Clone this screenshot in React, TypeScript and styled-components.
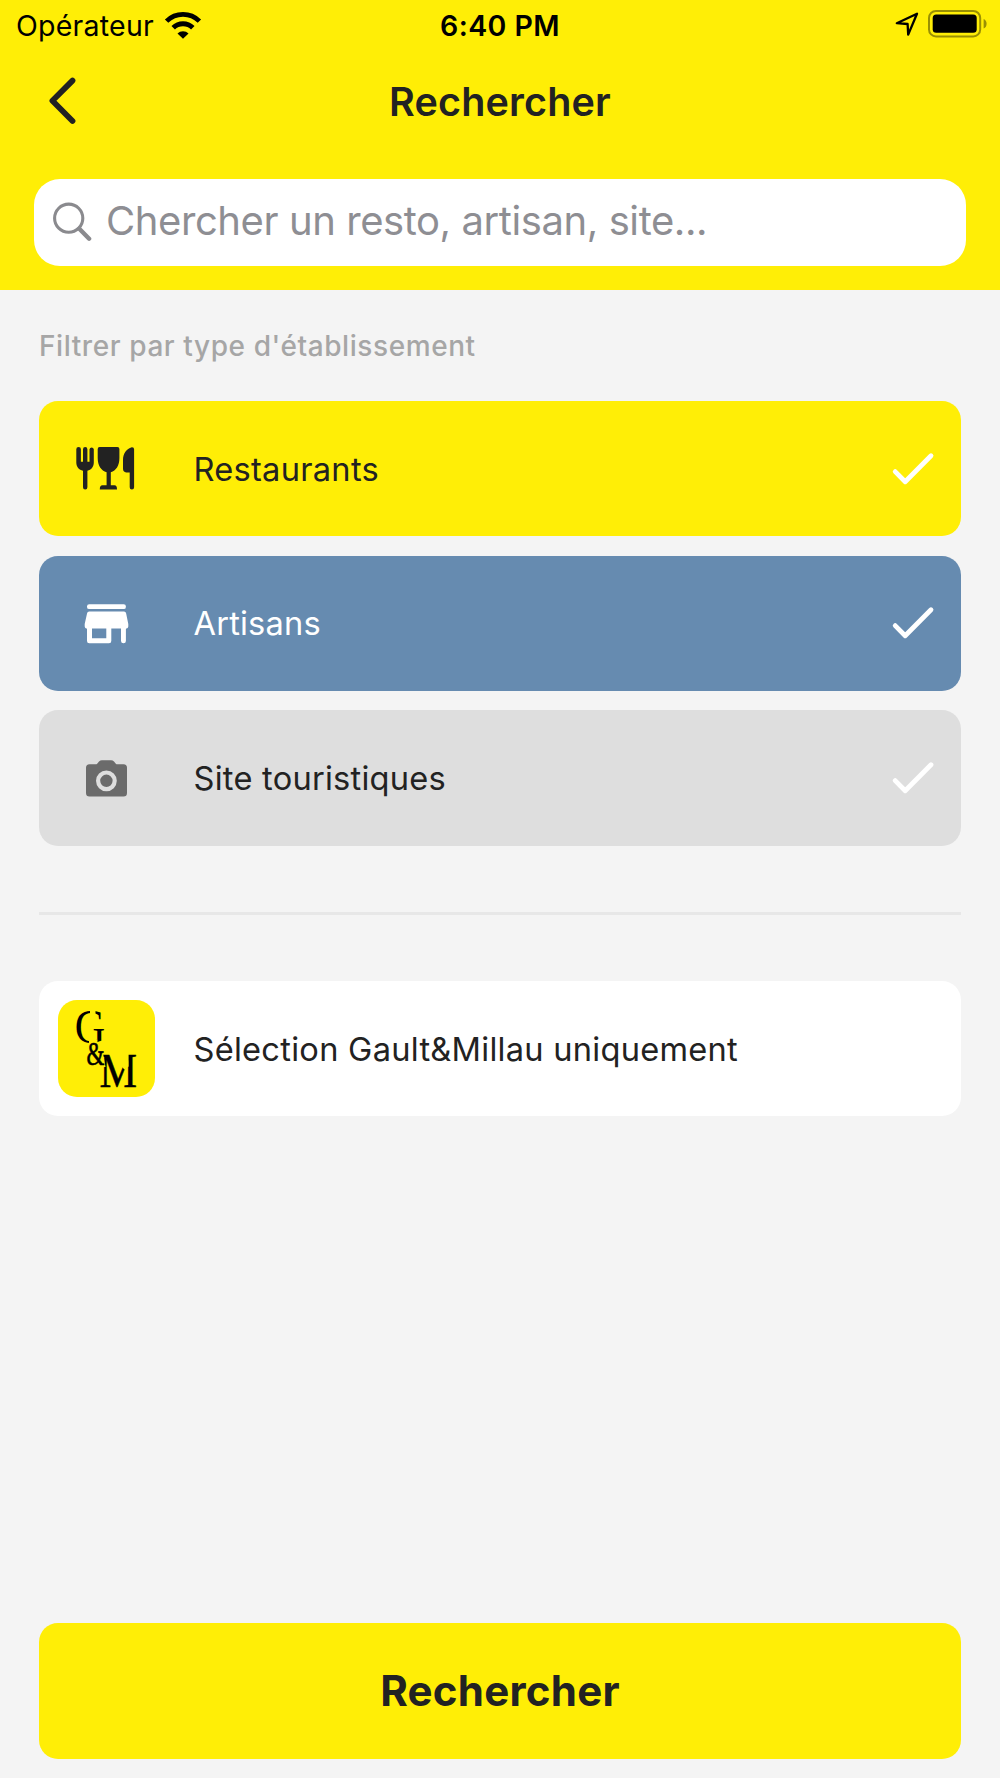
import React from "react";
import styled, { createGlobalStyle } from "styled-components";

const YELLOW = "#ffee06";
const INK = "#222222";
const BACKDROP = "#f4f4f4";

const GlobalStyle = createGlobalStyle`
  *, *::before, *::after { box-sizing: border-box; }
  body { margin: 0; background: ${BACKDROP}; }
  button { font: inherit; border: 0; margin: 0; padding: 0; background: none; cursor: pointer; }
  svg { display: block; flex: none; }
`;

const Screen = styled.div`
  display: flex;
  flex-direction: column;
  width: 1000px;
  height: 1778px;
  overflow: hidden;
  background: ${BACKDROP};
  color: ${INK};
  font-family: Inter, "Liberation Sans", sans-serif;
`;

const Header = styled.header`
  display: flex;
  flex-direction: column;
  height: 290px;
  background: ${YELLOW};
`;

const StatusBar = styled.div`
  display: grid;
  grid-template-columns: 1fr auto 1fr;
  align-items: center;
  height: 51px;
  padding: 0 12px 0 16px;
  color: #000;
  font-size: 28.5px;
  line-height: 51px;
`;

const Carrier = styled.div`
  display: flex;
  align-items: center;
  gap: 9.5px;
  letter-spacing: 0.24px;

  svg {
    margin-bottom: 4px;
  }
`;

const Clock = styled.div`
  font-weight: 600;
  letter-spacing: 0.44px;
  padding-right: 4px;
`;

const StatusIcons = styled.div`
  display: flex;
  align-items: center;
  justify-content: flex-end;
  gap: 9.5px;
  padding-bottom: 2.5px;
`;

const NavBar = styled.div`
  display: grid;
  grid-template-columns: 90px 1fr 90px;
  align-items: center;
  height: 102px;
  padding: 0 17px;
`;

const BackButton = styled.button`
  display: flex;
  align-items: center;
  justify-content: center;
  height: 60px;
  padding-bottom: 3px;
`;

const Title = styled.h1`
  margin: 0;
  text-align: center;
  font-size: 39.5px;
  font-weight: 600;
  line-height: 103px;
  letter-spacing: 0.16px;
`;

const SearchField = styled.div`
  display: flex;
  align-items: center;
  height: 87px;
  margin: 26px 34px 0;
  padding: 0 18px;
  border-radius: 26px;
  background: #fff;
  color: #8e8e93;
`;

const Placeholder = styled.span`
  margin-left: 14px;
  padding-bottom: 3px;
  font-size: 40px;
  line-height: 48px;
  letter-spacing: -0.42px;
  white-space: nowrap;
`;

const Content = styled.main`
  display: flex;
  flex: 1;
  flex-direction: column;
  padding: 0 39px;
`;

const SectionLabel = styled.h2`
  height: 111px;
  margin: 0;
  color: #a6a6a6;
  font-size: 28px;
  font-weight: 500;
  line-height: 113px;
  letter-spacing: 0.58px;
`;

const FilterList = styled.div`
  display: flex;
  flex-direction: column;
  gap: 19.4px;
`;

const Card = styled.div<{ $bg: string; $fg?: string }>`
  display: flex;
  align-items: center;
  height: 135.3px;
  padding: 0 24px 0 19px;
  border-radius: 19px;
  background: ${(p) => p.$bg};
  color: ${(p) => p.$fg ?? INK};
`;

const CardLabel = styled.span<{ $tracking?: number }>`
  flex: 1;
  margin-left: 38.5px;
  font-size: 32.6px;
  letter-spacing: ${(p) => p.$tracking ?? 0.27}px;
`;

const Divider = styled.hr`
  width: 100%;
  height: 2.6px;
  margin: 66.4px 0;
  border: 0;
  background: #e7e7e7;
`;

const LogoTile = styled.div`
  width: 97px;
  height: 97px;
  border-radius: 19px;
  background: ${YELLOW};
`;

const Footer = styled.footer`
  padding: 0 39px 19.5px;
`;

const SubmitButton = styled.button`
  width: 100%;
  height: 135.3px;
  border-radius: 19px;
  background: ${YELLOW};
  color: ${INK};
  font-size: 42px;
  font-weight: 700;
  letter-spacing: 0.25px;
`;

const WifiIcon = () => (
  <svg width="38" height="30" viewBox="0 0 38 30" fill="none" stroke="#000">
    <path d="M2.6 12.1A23.3 23.3 0 0 1 35.4 12.1" strokeWidth="4.8" />
    <path d="M9.2 18.8A13.9 13.9 0 0 1 28.8 18.8" strokeWidth="4.9" />
    <path d="M19 29.8L13.5 24.6A7.4 7.4 0 0 1 24.5 24.6Z" fill="#000" stroke="none" />
  </svg>
);

const LocationIcon = () => (
  <svg width="24" height="26" viewBox="0 0 24 26" fill="none" stroke="#000" strokeWidth="2.3" strokeLinejoin="round">
    <path d="M1.8 12.2L22 2.8L13.2 23.6L12.6 13Z" />
  </svg>
);

const BatteryIcon = () => (
  <svg width="60" height="28" viewBox="0 0 60 28">
    <rect x="1" y="1" width="51.2" height="25.4" rx="7" fill="none" stroke="#000" strokeOpacity="0.4" strokeWidth="2" />
    <rect x="4.7" y="4.6" width="44" height="18.2" rx="3.5" fill="#000" />
    <path d="M55.6 9C59.6 10.6 59.6 17 55.6 18.6Z" fill="#000" fillOpacity="0.4" />
  </svg>
);

const BackIcon = () => (
  <svg width="36" height="54" viewBox="0 0 36 54" fill="none" stroke={INK} strokeWidth="5.8" strokeLinecap="round" strokeLinejoin="round">
    <path d="M28.5 6.6L8.4 26.8L28.5 47" />
  </svg>
);

const SearchIcon = () => (
  <svg width="40" height="42" viewBox="0 0 40 42" fill="none" stroke="#8a8a8e">
    <circle cx="16.7" cy="16.2" r="14.1" strokeWidth="3.1" />
    <path d="M27.3 26.8L37.1 36.7" strokeWidth="4.4" strokeLinecap="round" />
  </svg>
);

const CheckIcon = () => (
  <svg width="48" height="48" viewBox="0 0 48 48" fill="none" stroke="#fff" strokeWidth="4.8" strokeLinecap="round" strokeLinejoin="round">
    <path d="M6.2 26.6L16.2 36.7L42 10.8" />
  </svg>
);

const RestaurantIcon = () => (
  <svg width="97" height="97" viewBox="0 0 97 97" fill={INK}>
    <path d="M18.3 29.2a2.2 2.2 0 0 1 4.6 0V41.7H25V29.2a2.2 2.2 0 0 1 4.4 0V41.7h2.1V29.2a2.2 2.2 0 0 1 4.3 0V42.5c0 4.3-2.6 7.4-6.4 8.2V67.2a2.2 2.2 0 0 1-4.4 0V50.7c-4-.8-6.7-3.9-6.7-8.2Z" />
    <path d="M41.6 27H59.4Q61.4 27 61.4 29V38C61.4 45.5 58 50.8 52.8 52.3V65.2H56.5Q59 65.2 59 69.4H41.8Q41.8 65.2 44.4 65.2H48.6V52.3C43.2 50.8 39.7 45.5 39.7 38V29Q39.7 27 41.6 27Z" />
    <path d="M73.8 27.2Q76.1 27 76.1 29.3V67.2a2.2 2.2 0 0 1-4.4 0V52.4H68.2Q65 52.4 65 48.6V40C65 33.5 68.5 28.6 73.8 27.2Z" />
  </svg>
);

const StoreIcon = () => (
  <svg width="97" height="97" viewBox="0 0 97 97" fill="#fff">
    <rect x="29" y="29.2" width="38.9" height="4.9" rx="2.2" />
    <path d="M31.2 36.5H66Q67.8 36.5 68.1 38.2L70.3 49V51.5Q70.3 53.5 67.9 53.7V66Q67.9 68.2 65.5 68.2T63 66V53.5H53.3V66Q53.3 68.2 51 68.2H31.3Q29 68.2 29 66V53.7Q26.7 53.5 26.7 51.5V49L29.1 38.2Q29.4 36.5 31.2 36.5ZM34 53.5V63.2H48.3V53.5Z" fillRule="evenodd" />
  </svg>
);

const CameraIcon = () => (
  <svg width="97" height="97" viewBox="0 0 97 97" fill="#6b6b6b">
    <path d="M31.5 34.3H37.4Q38.6 34.3 39.4 33.4L41 31.6Q42.2 30.3 44 30.3H53Q54.8 30.3 56 31.6L57.6 33.4Q58.4 34.3 59.6 34.3H65.5Q69 34.3 69 37.8V63Q69 66.5 65.5 66.5H31.5Q28 66.5 28 63V37.8Q28 34.3 31.5 34.3Z" />
    <circle cx="48.4" cy="50.8" r="8.3" fill="none" stroke="#dedede" strokeWidth="4.2" />
  </svg>
);

/* Stencil-cut monogram: serif letters with slits knocked out in the tile colour. */
const Monogram = () => (
  <svg width="97" height="97" viewBox="0 0 97 97" fontFamily='"Liberation Serif", serif' fill="#000">
    <text transform="translate(16.8 43.3) scale(.86 1)" fontSize="49">G</text>
    <path d="M32 8H37.5V14H32ZM31 39.5H39.5V46H31Z" fill={YELLOW} />
    <text transform="translate(41.6 87) scale(.86 1)" fontSize="49" stroke="#000" strokeWidth="0.5">M</text>
    <path d="M41 53H45L47.5 67H41ZM64.5 52H70.6V66.5L66.5 69.5L64 67Z" fill={YELLOW} />
    <text transform="translate(28.6 65.4) scale(.68 1)" fontSize="34" stroke="#000" strokeWidth="0.6">&amp;</text>
  </svg>
);

const filters = [
  { label: "Restaurants", bg: YELLOW, fg: INK, tracking: 0.28, Icon: RestaurantIcon },
  { label: "Artisans", bg: "#668bb0", fg: "#ffffff", tracking: 0.2, Icon: StoreIcon },
  { label: "Site touristiques", bg: "#dedede", fg: INK, tracking: 0.25, Icon: CameraIcon },
];

export default function App() {
  return (
    <Screen>
      <GlobalStyle />
      <Header>
        <StatusBar>
          <Carrier>
            Opérateur
            <WifiIcon />
          </Carrier>
          <Clock>6:40 PM</Clock>
          <StatusIcons>
            <LocationIcon />
            <BatteryIcon />
          </StatusIcons>
        </StatusBar>
        <NavBar>
          <BackButton aria-label="Retour">
            <BackIcon />
          </BackButton>
          <Title>Rechercher</Title>
        </NavBar>
        <SearchField>
          <SearchIcon />
          <Placeholder>Chercher un resto, artisan, site...</Placeholder>
        </SearchField>
      </Header>
      <Content>
        <SectionLabel>Filtrer par type d'établissement</SectionLabel>
        <FilterList>
          {filters.map(({ label, bg, fg, tracking, Icon }) => (
            <Card key={label} $bg={bg} $fg={fg}>
              <Icon />
              <CardLabel $tracking={tracking}>{label}</CardLabel>
              <CheckIcon />
            </Card>
          ))}
        </FilterList>
        <Divider />
        <Card $bg="#ffffff">
          <LogoTile>
            <Monogram />
          </LogoTile>
          <CardLabel>Sélection Gault&amp;Millau uniquement</CardLabel>
        </Card>
      </Content>
      <Footer>
        <SubmitButton>Rechercher</SubmitButton>
      </Footer>
    </Screen>
  );
}
